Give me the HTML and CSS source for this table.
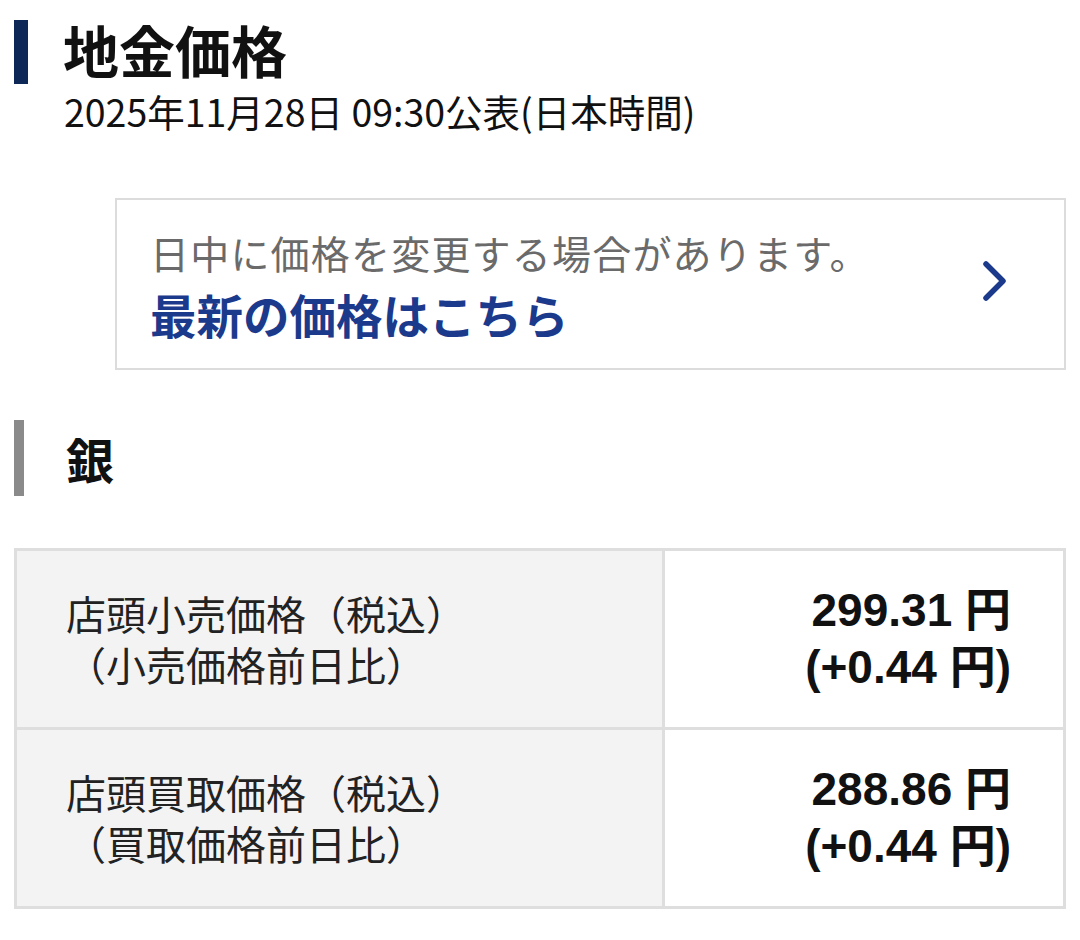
FILE: index.html
```html
<!DOCTYPE html>
<html lang="ja">
<head>
<meta charset="utf-8">
<link rel="stylesheet" href="styles.css">
</head>
<body>
<div class="page">
  <header class="head">
    <h1 class="title">地金価格</h1>
    <p class="date">2025年11月28日 09:30公表(日本時間)</p>
  </header>

  <a class="notice" href="#">
    <div class="notice-text">
      <p class="notice-sub">日中に価格を変更する場合があります。</p>
      <p class="notice-link">最新の価格はこちら</p>
    </div>
    <svg class="chevron" width="26" height="40" viewBox="0 0 26 40"><path d="M4 3 L21 20 L4 37" fill="none" stroke="#1c3a8c" stroke-width="5.5" stroke-linecap="round" stroke-linejoin="round"/></svg>
  </a>

  <h2 class="metal">銀</h2>

  <table class="prices">
    <tr>
      <th>店頭小売価格（税込）<br>（小売価格前日比）</th>
      <td>299.31 円<br>(+0.44 円)</td>
    </tr>
    <tr>
      <th>店頭買取価格（税込）<br>（買取価格前日比）</th>
      <td>288.86 円<br>(+0.44 円)</td>
    </tr>
  </table>
</div>
</body>
</html>
```

FILE: styles.css
```css
html, body {
  margin: 0;
  padding: 0;
  background: #fff;
}
body {
  font-family: "Noto Sans CJK JP", "Noto Sans", sans-serif;
  color: #111;
}
.page {
  width: 1080px;
  padding-top: 20px;
}
.head {
  margin-left: 14px;
}
.title {
  margin: 0;
  border-left: 14px solid #0d2857;
  padding: 3px 0 0 35px;
  height: 61px;
  line-height: 61px;
  font-family: "Liberation Sans", "Noto Sans CJK JP", sans-serif;
  font-size: 56px;
  font-weight: 700;
  color: #111;
}
.date {
  margin: 2px 0 0 50px;
  font-size: 37.5px;
  line-height: 50px;
  color: #111;
}
.notice {
  display: flex;
  align-items: center;
  justify-content: space-between;
  margin: 62px 14px 0 115px;
  height: 172px;
  box-sizing: border-box;
  border: 2px solid #dcdcdc;
  padding: 0 56px 0 33px;
  text-decoration: none;
}
.notice-text p {
  margin: 0;
}
.notice-sub {
  font-size: 39px;
  line-height: 50px;
  color: #6a6a6a;
  letter-spacing: 1.2px;
}
.notice-link {
  margin-top: 10px !important;
  font-size: 46.5px;
  line-height: 54px;
  font-weight: 700;
  color: #1c3a8c;
}
.chevron {
  display: block;
  margin-top: -6px;
}
.metal {
  margin: 50px 0 0 14px;
  border-left: 10px solid #8a8a8a;
  padding-left: 42px;
  height: 76px;
  line-height: 76px;
  font-size: 48px;
  font-weight: 700;
  color: #111;
}
.prices {
  margin: 52px 0 0 14px;
  width: 1052px;
  border-collapse: collapse;
  border: 3px solid #dedede;
}
.prices tr {
  height: 179px;
}
.prices th, .prices td {
  border: 3px solid #dedede;
  vertical-align: middle;
}
.prices th {
  width: 596px;
  background: #f3f3f3;
  text-align: left;
  font-family: "Liberation Sans", "Noto Sans CJK JP", sans-serif;
  font-weight: 400;
  font-size: 40px;
  line-height: 51px;
  padding: 6px 0 0 49px;
  color: #222;
}
.prices td {
  text-align: right;
  font-family: "Liberation Sans", "Noto Sans CJK JP", sans-serif;
  font-weight: 700;
  font-size: 46px;
  line-height: 57px;
  padding: 0 52px 0 0;
  color: #111;
}
```
